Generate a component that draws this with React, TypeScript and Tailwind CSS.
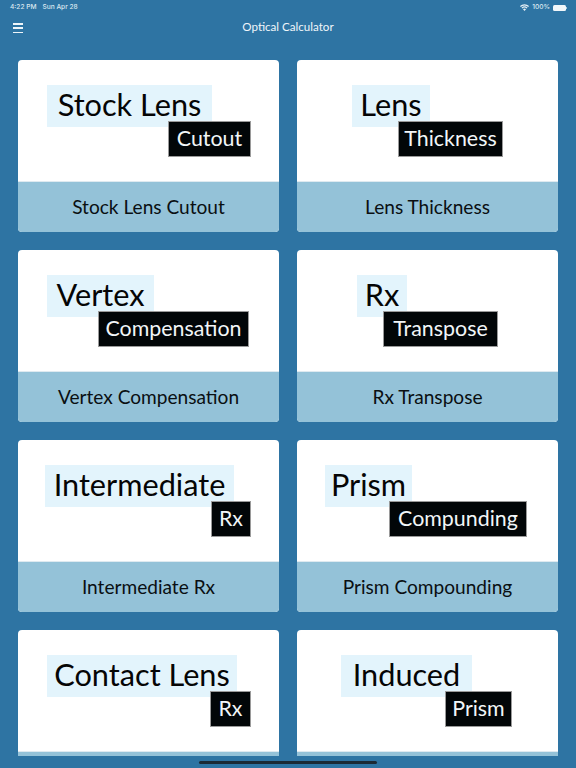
const font = { fontFamily: "Lato, 'Noto Sans', sans-serif" };

type Card = {
  label: string;
  title: string;
  sub: string;
  titleCls: string;
  subCls: string;
};

const cards: Card[] = [
  { label: "Stock Lens Cutout", title: "Stock Lens", sub: "Cutout", titleCls: "ml-[29px] w-[165px]", subCls: "ml-[150px] w-[83px]" },
  { label: "Lens Thickness", title: "Lens", sub: "Thickness", titleCls: "ml-[55px] w-[78px]", subCls: "ml-[101px] w-[105px]" },
  { label: "Vertex Compensation", title: "Vertex", sub: "Compensation", titleCls: "ml-[29px] w-[107px]", subCls: "ml-[80px] w-[151px]" },
  { label: "Rx Transpose", title: "Rx", sub: "Transpose", titleCls: "ml-[60px] w-[50px]", subCls: "ml-[86px] w-[115px]" },
  { label: "Intermediate Rx", title: "Intermediate", sub: "Rx", titleCls: "ml-[27px] w-[189px]", subCls: "ml-[193px] w-[40px]" },
  { label: "Prism Compounding", title: "Prism", sub: "Compunding", titleCls: "ml-[28px] w-[87px]", subCls: "ml-[92px] w-[138px]" },
  { label: "Contact Lens Rx", title: "Contact Lens", sub: "Rx", titleCls: "ml-[29px] w-[190px]", subCls: "ml-[192px] w-[41px]" },
  { label: "Induced Prism", title: "Induced", sub: "Prism", titleCls: "ml-[44px] w-[131px]", subCls: "ml-[148px] w-[67px]" },
];

function Wifi() {
  return (
    <svg width="9" height="7" viewBox="0 0 18 14" fill="#e8f1f6">
      <path d="M9 14 6 10.6a4.4 4.4 0 0 1 6 0Z" />
      <path d="M4.6 9.1 3 7.3a8.6 8.6 0 0 1 12 0l-1.6 1.8a6.2 6.2 0 0 0-8.8 0Z" />
      <path d="M1.6 5.9 0 4.1a13 13 0 0 1 18 0l-1.6 1.8a10.6 10.6 0 0 0-14.8 0Z" />
    </svg>
  );
}

function Battery() {
  return (
    <div className="flex items-center">
      <div className="w-[13px] h-[6px] rounded-[1.5px] bg-[#f2f7fa]" />
      <div className="w-[1px] h-[2px] bg-[#a9c9dc]" />
    </div>
  );
}

export default function App() {
  return (
    <div className="w-[576px] h-[768px] overflow-hidden bg-[#2e74a3]" style={font}>
      <div className="h-[756px] overflow-hidden">
        <div className="h-[15px] pt-[1px] flex items-center justify-between pl-[10px] pr-[9px] text-[6.6px] font-medium text-[#dbe8f0] font-['Inter']">
          <div className="flex gap-[6px]">
            <span>4:22 PM</span>
            <span>Sun Apr 28</span>
          </div>
          <div className="flex items-center gap-[3px]">
            <Wifi />
            <span>100%</span>
            <Battery />
          </div>
        </div>
        <div className="relative h-[27px] pb-[3px] flex items-center justify-center">
          <div className="absolute left-[13px] top-[8px] w-[10px] flex flex-col gap-[2.75px]">
            <div className="h-[1.5px] bg-[#eef5f9]" />
            <div className="h-[1.5px] bg-[#eef5f9]" />
            <div className="h-[1.5px] bg-[#eef5f9]" />
          </div>
          <span className="text-[11.6px] text-[#f0f6fa]">Optical Calculator</span>
        </div>
        <div className="grid grid-cols-[261px_261px] gap-x-[18px] gap-y-[18px] pl-[18px] pt-[18px]">
          {cards.map((c) => (
            <div key={c.label} className="h-[172px] rounded-[4px] overflow-hidden bg-white flex flex-col">
              <div className="h-[121px] pt-[25px]">
                <div className={`${c.titleCls} h-[42px] pb-[2px] bg-[#e3f4fc] flex items-center justify-center text-[30.7px] leading-[38px] text-[#050505] whitespace-nowrap`}>
                  {c.title}
                </div>
                <div className={`${c.subCls} relative -mt-[6px] h-[36px] pb-[2px] bg-[#020608] border border-[#9a9a9a] flex items-center justify-center text-[21.4px] text-[#f2f6f8] whitespace-nowrap`}>
                  {c.sub}
                </div>
              </div>
              <div className="h-[51px] bg-[#94c2d8] border-t border-[#dfeaf0] flex items-center justify-center text-[19.1px] text-[#0a0f12] whitespace-nowrap">
                {c.label}
              </div>
            </div>
          ))}
        </div>
      </div>
      <div className="pt-[5px] flex justify-center">
        <div className="w-[178px] h-[3px] rounded-full bg-[#1b2a35]" />
      </div>
    </div>
  );
}
